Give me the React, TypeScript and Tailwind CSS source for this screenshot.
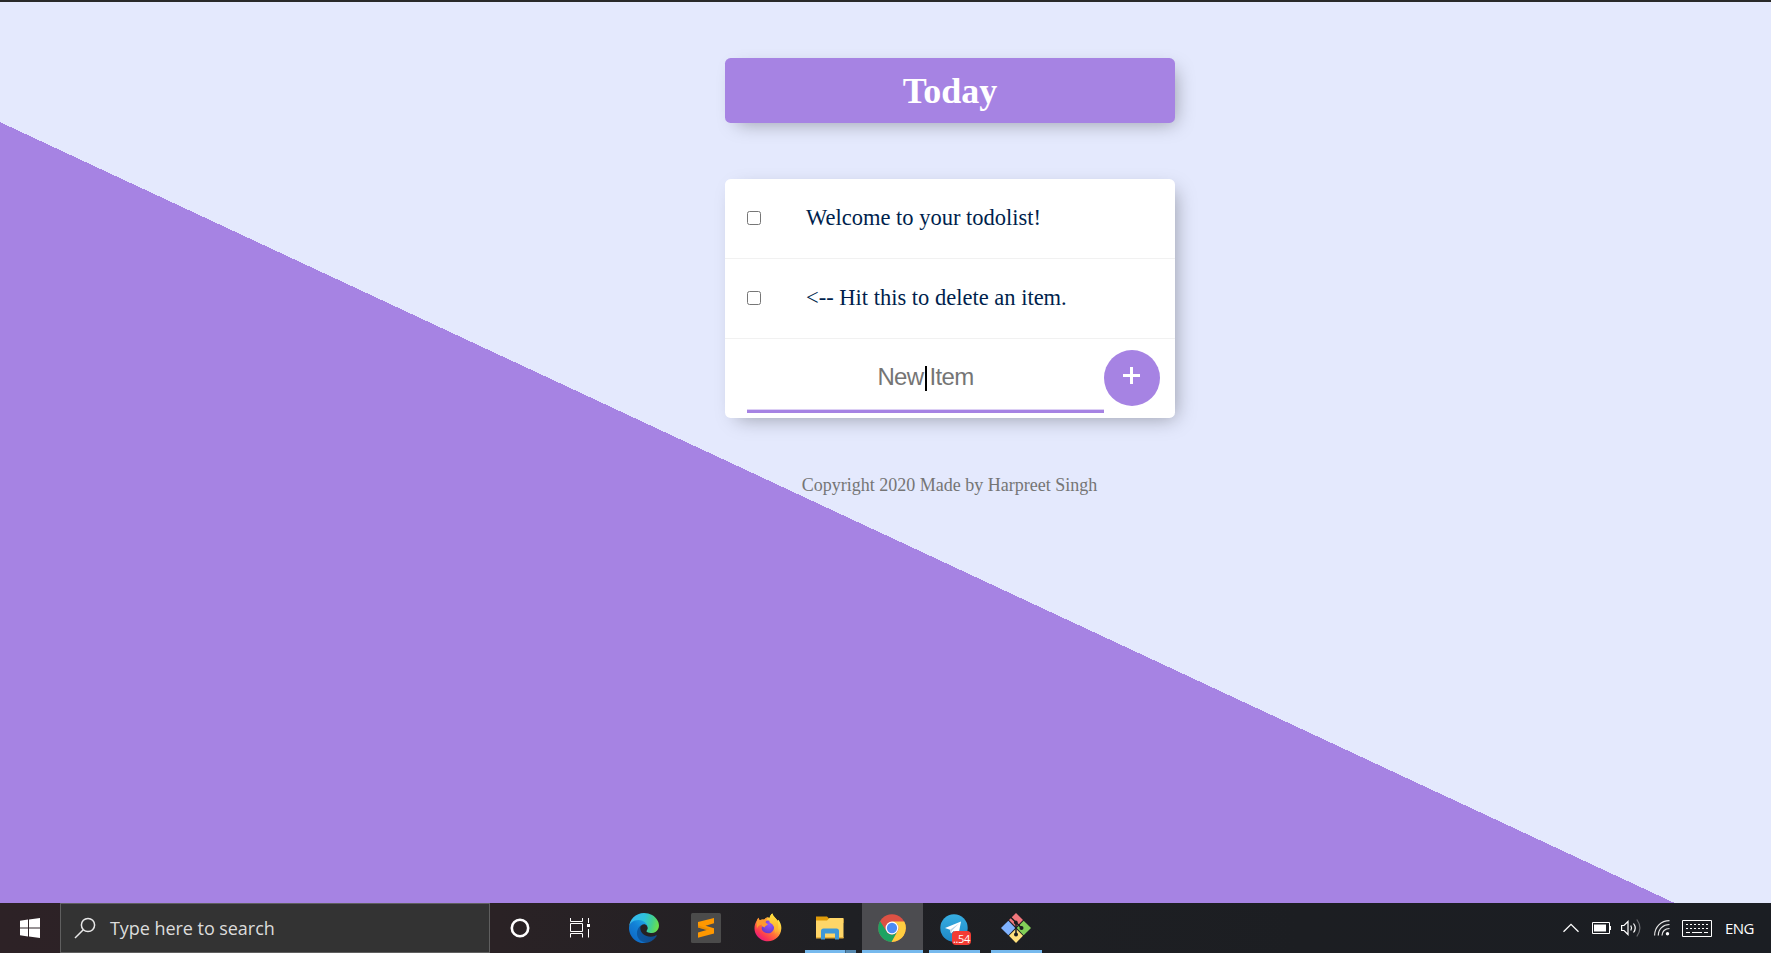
import type { ReactNode } from "react";

const items = ["Welcome to your todolist!", "<-- Hit this to delete an item."];

function TodoItem({ text }: { text: string }) {
  return (
    <div className="flex h-20 items-center border-b border-[#f1f1f1] pb-px pl-[22px]">
      <span className="h-3.5 w-3.5 shrink-0 rounded-[2.5px] border border-[#767676] bg-white" />
      <p className="ml-[45px] pb-px text-[22.5px] leading-7 whitespace-nowrap text-[#001f4d]">{text}</p>
    </div>
  );
}

function Task({ children, bar, active }: { children: ReactNode; bar?: "full" | "split" | "wide"; active?: boolean }) {
  return (
    <div className="flex h-[50px] w-[62px] flex-col items-center">
      <div className={active ? "flex h-[47px] w-[61px] items-center justify-center bg-[#4c4c50] pt-[3px]" : "flex h-[47px] w-[61px] items-center justify-center pt-[3px]"}>
        {children}
      </div>
      {bar === "full" && <div className="h-[3px] w-[51px] bg-[#76b9ed]" />}
      {bar === "wide" && <div className="h-[3px] w-[61px] bg-[#76b9ed]" />}
      {bar === "split" && (
        <div className="flex h-[3px] w-[51px]">
          <div className="w-10 bg-[#76b9ed]" />
          <div className="w-[11px] border-l border-[#3f6582] bg-[#5689b0]" />
        </div>
      )}
    </div>
  );
}

function WindowsIcon() {
  return (
    <svg width="20" height="20" viewBox="0 0 20 20" fill="#fff">
      <path d="M0 2.7 8 1.6V9.4H0zM9 1.4 20 0V9.4H9zM0 10.5H8V18.4L0 17.3zM9 10.5H20V20L9 18.6z" />
    </svg>
  );
}

function SearchIcon() {
  return (
    <svg width="22" height="22" viewBox="0 0 22 22" fill="none" stroke="#e8e8e8" strokeWidth="1.500">
      <circle cx="14" cy="8" r="6.600" />
      <path d="M9.3 12.7 1 21" />
    </svg>
  );
}

function TaskViewIcon() {
  return (
    <svg width="20" height="20" viewBox="0 0 20 20" fill="none" stroke="#fff" strokeWidth="1">
      <path d="M.5 0V3.5H12.5V0M.5 19.5V15.5H12.5V19.5M.5 5.5H12.5V13.5H.5zM18.5 0V5M18.5 11V19.5" />
      <path d="M17 6h3v3h-3z" fill="#fff" stroke="none" />
    </svg>
  );
}

function EdgeIcon() {
  return (
    <svg width="30" height="30" viewBox="0 0 256 256">
      <defs>
        <linearGradient id="e1" x1="60" y1="176" x2="240" y2="176" gradientUnits="userSpaceOnUse">
          <stop offset="0" stopColor="#0c59a4" />
          <stop offset="1" stopColor="#114a8b" />
        </linearGradient>
        <linearGradient id="e2" x1="150" y1="100" x2="40" y2="225" gradientUnits="userSpaceOnUse">
          <stop offset="0" stopColor="#1b9de2" />
          <stop offset=".4" stopColor="#1280d6" />
          <stop offset="1" stopColor="#0f6cc8" />
        </linearGradient>
        <linearGradient id="e3" x1="20" y1="60" x2="245" y2="120" gradientUnits="userSpaceOnUse">
          <stop offset="0" stopColor="#35b9f1" />
          <stop offset=".45" stopColor="#2ec2dc" />
          <stop offset=".75" stopColor="#42cf90" />
          <stop offset="1" stopColor="#6be04b" />
        </linearGradient>
      </defs>
      <path fill="url(#e1)" d="M231 190.500c-3.400 1.800-6.900 3.400-10.500 4.700-11.500 4.300-23.600 6.500-35.900 6.500-47.300 0-88.500-32.500-88.500-74.300.1-11.400 6.400-21.900 16.400-27.300-42.800 1.800-53.800 46.400-53.800 72.500 0 73.900 68.100 81.400 82.800 81.400 7.900 0 19.800-2.300 27-4.600l1.300-.4c27.600-9.500 51-28.100 66.600-52.800 1.200-1.900.6-4.300-1.200-5.500-1.300-.8-2.900-.9-4.200-.2z" />
      <path fill="url(#e2)" d="M105.700 241.400c-8.900-5.500-16.600-12.800-22.700-21.300-26.300-36-18.400-86.500 17.600-112.800 3.800-2.700 7.700-5.200 11.900-7.200 3.100-1.500 8.400-4.100 15.500-4 10.100.1 19.600 4.900 25.700 13 4 5.400 6.300 11.900 6.400 18.700 0-.2 24.500-79.600-80-79.600-43.900 0-80 41.700-80 78.200-.2 19.300 4 38.500 12.100 56 27.600 58.800 94.800 87.600 156.400 67.100-21.100 6.600-44.100 3.700-62.900-8.100z" />
      <path fill="url(#e3)" d="M152.300 148.900c-.9 1-3.400 2.500-3.400 5.600 0 2.600 1.700 5.200 4.800 7.300 14.300 10 41.400 8.600 41.500 8.600 10.700 0 21.100-2.900 30.300-8.300 18.800-11 30.400-31.100 30.400-52.900.3-22.400-8-37.300-11.300-43.900C223.500 23.900 177.700 0 128 0 58 0 1 56.200 0 126.200c.5-36.500 36.800-66 80-66 3.500 0 23.500.3 42 10.100 16.300 8.600 24.900 18.900 30.800 29.200 6.200 10.700 7.300 24.100 7.300 29.500 0 5.300-2.700 13.300-7.800 19.900z" />
    </svg>
  );
}

function SublimeIcon() {
  return (
    <svg width="30" height="30" viewBox="0 0 30 30">
      <rect width="30" height="30" rx="1.500" fill="#4b4b4b" />
      <path d="M7 9 23 5V10.300L14.500 12.700 23 15.300V20.600L7 24.700V19.400L15.600 17 7 14.500z" fill="#ff9800" />
      <path d="M7 12.500V14.500L15.600 17 19 16z" fill="#d98200" opacity=".5" />
    </svg>
  );
}

function FirefoxIcon() {
  return (
    <svg className="mr-px" width="28" height="30" viewBox="0 0 29 30">
      <defs>
        <linearGradient id="f1" x1="24" y1="3" x2="5" y2="27" gradientUnits="userSpaceOnUse">
          <stop offset="0" stopColor="#fff44f" />
          <stop offset=".3" stopColor="#ffc23a" />
          <stop offset=".55" stopColor="#ff7139" />
          <stop offset=".8" stopColor="#fb3753" />
          <stop offset="1" stopColor="#e31587" />
        </linearGradient>
        <radialGradient id="f2" cx=".6" cy=".3" r=".8">
          <stop offset="0" stopColor="#9059ff" />
          <stop offset="1" stopColor="#6735c4" />
        </radialGradient>
        <linearGradient id="f3" x1="0" y1="0" x2="0" y2="1">
          <stop offset="0" stopColor="#ffe13f" />
          <stop offset="1" stopColor="#ffa52a" />
        </linearGradient>
      </defs>
      <path d="M2.800 7.500C3.200 6 4 4.800 4.800 4.300 4.900 5.500 5.300 6.200 6 6.900 8 6 9 6.100 10.500 6.500 11.800 5 13 4 14.800 3.800L16 4.800C16.600 2.600 17.500 1 19 0 19.600 3 23 4.600 24.400 7.600L25.300 6.400C27.400 9.300 28.500 12.200 28.300 15.500 28 23 22 28.700 14.500 28.700 6.500 28.700.5 22.500.5 15.500.5 12.500 1.300 9.700 2.800 7.500z" fill="url(#f1)" />
      <path d="M11 8C14 6.500 18 7.500 20 10 21.800 13.500 20.800 18 17.500 19.800 13.500 21.500 9 19.500 8 16 7.800 13 9 10 11 8z" fill="url(#f2)" />
      <path d="M16 5C16.500 2.600 17.500 1 19 0 19.600 3 23 4.600 24.400 7.600 26 12 25 17.500 22 20.500 21.500 16 21.500 12 16 9z" fill="url(#f3)" />
      <path d="M2.600 9.500C2.800 8 3.500 6 4.800 4.300 4.900 5.500 5.300 6.200 6 6.900 8 6 9 6.100 10.500 6.500 11.800 5 13 4 14.800 3.800 13.500 5.500 12.500 7 12 9.500L14.500 11C13.500 12.500 11.300 12.500 11 14.500 9 14 8 13 7.800 11.300 5 12 3.500 14 3 16z" fill="#ff9a30" />
    </svg>
  );
}

function ExplorerIcon() {
  return (
    <svg width="28" height="24" viewBox="0 0 28 24">
      <path d="M0 0.500H11L13.500 3H27.500V7H0z" fill="#e09b09" />
      <path d="M0 4.500H11L13.500 2H27.500V22H0z" fill="#ffd668" />
      <path d="M0 21H27.500V22.500H0z" fill="#e8b13a" />
      <path d="M5 23.500V15Q5 12.500 7.500 12.500H20.500Q23 12.500 23 15V23.500H19V17.500H9V23.500z" fill="#3f98d8" />
    </svg>
  );
}

function ChromeIcon() {
  return (
    <svg width="28" height="28" viewBox="0 0 48 48">
      <circle cx="24" cy="24" r="23.500" fill="#dd5144" />
      <path d="M3.400 12.100 14.500 29.500A11 11 0 0 0 26.500 34.700L33.500 29.500 23.700 47.800A23.800 23.800 0 0 1 3.400 12.100z" fill="#1da362" />
      <path d="M24 13H45.100A23.800 23.800 0 0 1 23.200 47.800L33.500 29.500A11 11 0 0 0 33 17.500z" fill="#ffcd40" />
      <circle cx="24" cy="24" r="11" fill="#fff" />
      <circle cx="24" cy="24" r="8.800" fill="#4c8bf5" />
    </svg>
  );
}

function TelegramIcon() {
  return (
    <div className="relative h-7 w-7">
      <svg width="28" height="28" viewBox="0 0 28 28">
        <defs>
          <linearGradient id="t1" x1="0" y1="0" x2="0" y2="1">
            <stop offset="0" stopColor="#37aee2" />
            <stop offset="1" stopColor="#1e88c5" />
          </linearGradient>
        </defs>
        <circle cx="14" cy="14" r="13.700" fill="url(#t1)" />
        <path d="M5 14 21 7.500 18.500 20.500 13.500 17 11 19.500 10 15.700z" fill="#fff" />
        <path d="M10 15.700 19 9.500 12 16.500 11 19.500z" fill="#b9d4e8" />
      </svg>
      <span className="absolute top-[17px] left-3 flex h-3.5 w-[19px] items-center justify-center rounded-[4px] bg-[#f23c34] font-['Open_Sans',sans-serif] text-[11px] leading-none tracking-[-0.3px] text-white">
        ..54
      </span>
    </div>
  );
}

function GitIcon() {
  return (
    <svg width="30" height="30" viewBox="0 0 30 30">
      <path d="M15 0 22 7 15 14 8 7z" fill="#f1777c" />
      <path d="M7.300 7.700 14.300 15 7.300 22.300 0 15z" fill="#80b3ff" />
      <path d="M22.700 7.700 30 15 22.700 22.300 15.700 15z" fill="#82cf58" />
      <path d="M15 15.700 22 22.700 15 30 8 22.700z" fill="#ffe17d" />
      <g stroke="#1b1c20" strokeWidth="1.500" fill="none">
        <path d="M9.500 4 15 9.500V22M15 9.500 20.500 15" />
      </g>
      <g fill="#1b1c20">
        <circle cx="14.800" cy="9.500" r="1.900" />
        <circle cx="20.500" cy="15" r="2" />
        <circle cx="15" cy="21.500" r="2" />
      </g>
    </svg>
  );
}

function Tray() {
  return (
    <div className="ml-auto flex h-[50px] items-center pr-[18px]">
      <svg width="16" height="10" viewBox="0 0 16 10" fill="none" stroke="#fff" strokeWidth="1.300">
        <path d="M.5 8.800 8 1.300 15.500 8.800" />
      </svg>
      <svg className="ml-[13px]" width="19" height="12" viewBox="0 0 19 12">
        <path d="M.5 .5H17.500V11.500H.5z" fill="none" stroke="#fff" />
        <path d="M2 2.500H14V9.500H2zM18 4H19V8H18z" fill="#fff" />
      </svg>
      <svg className="ml-2.5" width="20" height="18" viewBox="0 0 20 18" fill="none" stroke="#fff" strokeWidth="1.200">
        <path d="M.6 6.500H3L7 2.500V15.500L3 11.500H.6z" />
        <path d="M9.800 6.500Q11.300 9 9.800 11.500M12.500 4.500Q16 9 12.500 13.500" />
        <path d="M15.800 .5Q22 9 15.800 17.500" stroke="#6b6c70" />
      </svg>
      <svg className="ml-[13px]" width="16" height="16" viewBox="0 0 16 16" fill="none" stroke="#e6e6e6" strokeWidth="1.200">
        <path d="M.6 15.500C.6 7 7 .6 15.500 .6M4.300 15.500C4.300 9 9 4.500 15.500 4.500M8 15.500C8 11.500 11 8.500 15.500 8.500" />
        <circle cx="13.500" cy="13.800" r="1.700" fill="#fff" stroke="none" />
      </svg>
      <svg className="ml-3" width="30" height="17" viewBox="0 0 30 17" fill="none" stroke="#fff">
        <path d="M.5 .5H29.500V16.500H.5z" />
        <path d="M4 4.500H27M4 8.500H27" strokeDasharray="2 2" />
        <path d="M4 12.500H8M10 12.500H20M22 12.500H26" />
      </svg>
      <span className="ml-[13px] w-7 font-['Open_Sans',sans-serif] text-[15px] leading-5 tracking-[-0.6px] text-white">ENG</span>
    </div>
  );
}

export default function App() {
  return (
    <div className="flex h-[953px] w-[1771px] flex-col overflow-hidden font-['Liberation_Serif',serif]">
      <div className="h-0.5 shrink-0 bg-[#292929]" />
      <main className="h-[901px] shrink-0 bg-[linear-gradient(25deg,#a683e3_calc(50%_-_74.8px),#e4e9fd_calc(50%_-_74.8px))]">
        <div className="ml-[725px] flex w-[450px] flex-col pt-14">
          <h1 className="flex h-[65px] items-center justify-center rounded-[5.6px] bg-[#a683e3] text-[36px] leading-none font-bold text-white shadow-[6px_6px_19px_-6px_rgba(0,0,0,0.35)]">
            Today
          </h1>
          <section className="mt-14 h-[239px] rounded-[5.6px] bg-white shadow-[6px_6px_19px_-6px_rgba(0,0,0,0.35)]">
            {items.map((text) => (
              <TodoItem key={text} text={text} />
            ))}
            <div className="flex h-[79px] pl-[22px]">
              <div className="relative flex h-[74px] w-[357px] items-center justify-center border-b-[3px] border-[#a683e3] pt-[5px] font-['Liberation_Sans',sans-serif] text-[24px] text-[#757575] shadow-[inset_0_-1px_0_#ddd0f5]">
                <span className="tracking-[-0.65px]">New Item</span>
                <span className="absolute top-[27px] left-[178px] h-[25px] w-0.5 bg-black" />
              </div>
              <button className="mt-[11px] flex h-14 w-14 items-center justify-center rounded-full bg-[#a683e3] pr-px pb-[5px]">
                <svg width="17" height="17" viewBox="0 0 17 17" fill="none" stroke="#fff" strokeWidth="3">
                  <path d="M8.500 0V17M0 8.500H17" />
                </svg>
              </button>
            </div>
          </section>
          <footer className="mt-[54px] pt-px pr-px text-center text-[18px] leading-6 text-[#757575]">Copyright 2020 Made by Harpreet Singh</footer>
        </div>
      </main>
      <div className="flex h-[50px] shrink-0 bg-[linear-gradient(90deg,#2d2226_0,#2a2225_500px,#1f2024_850px,#1c1e22_1300px,#1b1e23_1771px)]">
        <div className="flex w-[60px] items-center justify-center">
          <WindowsIcon />
        </div>
        <div className="flex h-[50px] w-[430px] items-center border border-[#5f5f5f] bg-[#333333] pl-[13px]">
          <SearchIcon />
          <span className="ml-[14px] font-['Open_Sans',sans-serif] text-[18px] tracking-[-0.05px] text-[#dcdcdc]">Type here to search</span>
        </div>
        <div className="flex w-[60px] items-center justify-center">
          <svg width="20" height="20" viewBox="0 0 20 20">
            <circle cx="10" cy="10" r="8.200" fill="none" stroke="#fff" strokeWidth="2.600" />
          </svg>
        </div>
        <div className="mr-[3px] flex w-[60px] items-center justify-center">
          <TaskViewIcon />
        </div>
        <Task><EdgeIcon /></Task>
        <Task><SublimeIcon /></Task>
        <Task><FirefoxIcon /></Task>
        <Task bar="split"><ExplorerIcon /></Task>
        <Task bar="wide" active><ChromeIcon /></Task>
        <Task bar="full"><TelegramIcon /></Task>
        <Task bar="full"><GitIcon /></Task>
        <Tray />
      </div>
    </div>
  );
}
